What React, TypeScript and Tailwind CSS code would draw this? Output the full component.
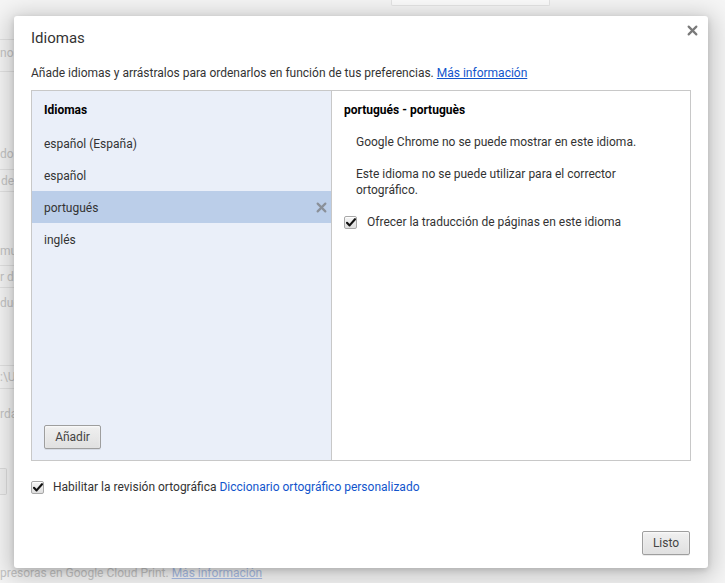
import React from "react";

const font = { fontFamily: "Roboto, 'Noto Sans', sans-serif" };

const Check: React.FC = () => (
  <span className="flex h-[13px] w-[13px] items-center justify-center rounded-[2px] border border-[#a8a8a8] bg-gradient-to-b from-[#f6f6f6] to-[#dedede] shadow-[inset_0_1px_0_#fff]">
    <svg width="10" height="9" viewBox="0 0 10 9">
      <path d="M1 4.8 L3.6 7.4 L9 1.2" fill="none" stroke="#111" strokeWidth="2.1" strokeLinecap="round" strokeLinejoin="round" />
    </svg>
  </span>
);

const ChromeButton: React.FC<{ label: string; className?: string }> = ({ label, className }) => (
  <button
    className={
      "h-6 rounded-[2px] border border-[#9e9e9e] bg-gradient-to-b from-[#f0f0f0] to-[#e0e0e0] text-[12px] text-[#444] shadow-[0_1px_0_rgba(0,0,0,0.08),inset_0_1px_2px_rgba(255,255,255,0.75)] " +
      (className ?? "")
    }
  >
    {label}
  </button>
);

const XIcon: React.FC<{ color: string; size: number }> = ({ color, size }) => (
  <svg width={size} height={size} viewBox="0 0 10 10">
    <path d="M1.5 1.5 L8.5 8.5 M8.5 1.5 L1.5 8.5" stroke={color} strokeWidth="2" strokeLinecap="round" />
  </svg>
);

const languages = ["español (España)", "español", "portugués", "inglés"];

export default function App() {
  return (
    <div className="relative h-[583px] w-[725px] overflow-hidden bg-[#f5f5f5] text-[#333]" style={font}>
      {/* faded settings page behind the overlay */}
      <div className="flex h-full flex-col text-[12px] text-[#c4c4c4]">
        <div className="flex">
          <div className="w-[391px]" />
          <div className="h-[6px] w-[159px] rounded-b-[2px] border border-t-0 border-[#e4e4e4] bg-[#fbfbfb]" />
        </div>
        <div className="mt-[33px] h-px w-[40px] bg-[#e2e2e2]" />
        <div className="mt-[6px] h-[14px] leading-[14px]">no</div>
        <div className="mt-[11px] h-px w-[40px] bg-[#e2e2e2]" />
        <div className="mt-[75px] h-[14px] leading-[14px]">do</div>
        <div className="mt-[8px] flex h-[23px] w-[30px] items-center border border-l-0 border-[#e2e2e2] pl-[1px]">de</div>
        <div className="mt-[52px] h-[14px] leading-[14px]">mu</div>
        <div className="mt-[7px] flex h-[23px] w-[30px] items-center border border-l-0 border-[#e2e2e2]">r de</div>
        <div className="mt-[8px] h-[14px] leading-[14px]">duc</div>
        <div className="mt-[55px] flex h-[24px] w-[30px] items-center border border-l-0 border-[#e2e2e2]">:\U</div>
        <div className="mt-[18px] h-[14px] leading-[14px]">rda</div>
        <div className="mt-[47px] h-[27px] w-[7px] rounded-r-[2px] border border-l-0 border-[#dcdcdc] bg-[#f0f0f0]" />
        <div className="mt-auto mb-[3px] whitespace-nowrap text-[12px] leading-[14px]">
          presoras en Google Cloud Print. <span className="text-[#a9bde6] underline">Más información</span>
        </div>
      </div>

      {/* dialog */}
      <div className="absolute left-[14px] top-[16px] flex h-[552px] w-[694px] flex-col rounded-[3px] bg-white px-[17px] shadow-[0_4px_23px_5px_rgba(0,0,0,0.2),0_2px_6px_rgba(0,0,0,0.15)]">
        <div className="flex items-start justify-between pt-[12px]">
          <h1 className="text-[15px] leading-[20px] text-[#333]">Idiomas</h1>
          <button className="-mr-[7px] -mt-[3px]">
            <XIcon color="#7a7a7a" size={11} />
          </button>
        </div>
        <p className="mt-[17px] text-[12px] leading-[16px]">
          Añade idiomas y arrástralos para ordenarlos en función de tus preferencias.{" "}
          <a className="text-[#15c] underline">Más información</a>
        </p>

        <div className="mt-[9px] flex h-[371px] w-[660px] border border-[#c8c8c8] text-[12px]">
          <div className="flex w-[300px] flex-col border-r border-[#c8c8c8] bg-[#eaeff9]">
            <div className="h-[36px] px-[12px] pt-[11px] font-bold leading-[16px] text-[#000]">Idiomas</div>
            {languages.map((lang) => {
              const selected = lang === "portugués";
              return (
                <div
                  key={lang}
                  className={
                    "flex h-[32px] items-center justify-between px-[12px] pt-[2px] " + (selected ? "bg-[#bbcee9]" : "")
                  }
                >
                  <span>{lang}</span>
                  {selected && (
                    <span className="-mr-[8px] -mt-[2px]">
                      <XIcon color="#8a9099" size={11} />
                    </span>
                  )}
                </div>
              );
            })}
            <div className="mt-auto px-[12px] pb-[11px]">
              <ChromeButton label="Añadir" className="w-[57px]" />
            </div>
          </div>

          <div className="flex-1 px-[12px]">
            <div className="h-[36px] pt-[11px] font-bold leading-[16px] text-[#000]">portugués - portuguès</div>
            <div className="pl-[12px] leading-[16px]">
              <p className="mt-[7px]">Google Chrome no se puede mostrar en este idioma.</p>
              <p className="mt-[16px]">
                Este idioma no se puede utilizar para el corrector
                <br />
                ortográfico.
              </p>
            </div>
            <label className="mt-[16px] flex items-center gap-[10px] leading-[16px]">
              <Check />
              <span>Ofrecer la traducción de páginas en este idioma</span>
            </label>
          </div>
        </div>

        <label className="mt-[18px] flex items-center gap-[9px] text-[12px] leading-[16px]">
          <Check />
          <span>
            Habilitar la revisión ortográfica <a className="text-[#15c]">Diccionario ortográfico personalizado</a>
          </span>
        </label>

        <div className="mt-auto flex justify-end pb-[13px] pr-[1px]">
          <ChromeButton label="Listo" className="w-[48px]" />
        </div>
      </div>
    </div>
  );
}
